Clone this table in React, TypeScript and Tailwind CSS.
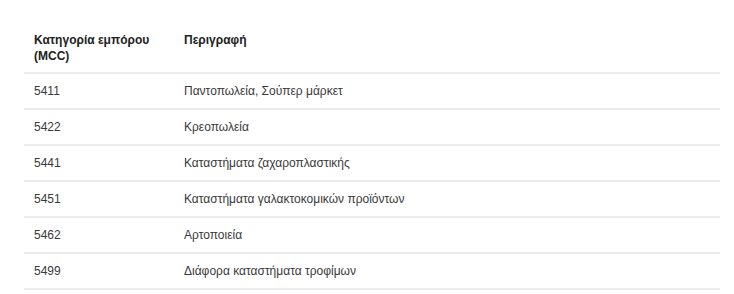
const rows: { code: string; desc: string }[] = [
  { code: '5411', desc: 'Παντοπωλεία, Σούπερ μάρκετ' },
  { code: '5422', desc: 'Κρεοπωλεία' },
  { code: '5441', desc: 'Καταστήματα ζαχαροπλαστικής' },
  { code: '5451', desc: 'Καταστήματα γαλακτοκομικών προϊόντων' },
  { code: '5462', desc: 'Αρτοποιεία' },
  { code: '5499', desc: 'Διάφορα καταστήματα τροφίμων' },
];

export default function App() {
  return (
    <div className="min-h-[294px] bg-white pt-6 pl-6 pr-[14px] font-['Liberation_Sans',Arial,sans-serif] text-[12px] leading-4">
      <table className="w-full border-collapse">
        <thead>
          <tr className="border-b-2 border-[#ececec]">
            <th className="w-[150px] px-[10px] py-2 text-left align-top font-bold text-[#222]">
              Κατηγορία εμπόρου (MCC)
            </th>
            <th className="px-[10px] py-2 text-left align-top font-bold text-[#222]">Περιγραφή</th>
          </tr>
        </thead>
        <tbody>
          {rows.map(r => (
            <tr key={r.code} className="border-b-2 border-[#ececec]">
              <td className="px-[10px] py-[9px] text-[#3a3a3a]">{r.code}</td>
              <td className="px-[10px] py-[9px] text-[#3a3a3a]">{r.desc}</td>
            </tr>
          ))}
        </tbody>
      </table>
    </div>
  );
}
